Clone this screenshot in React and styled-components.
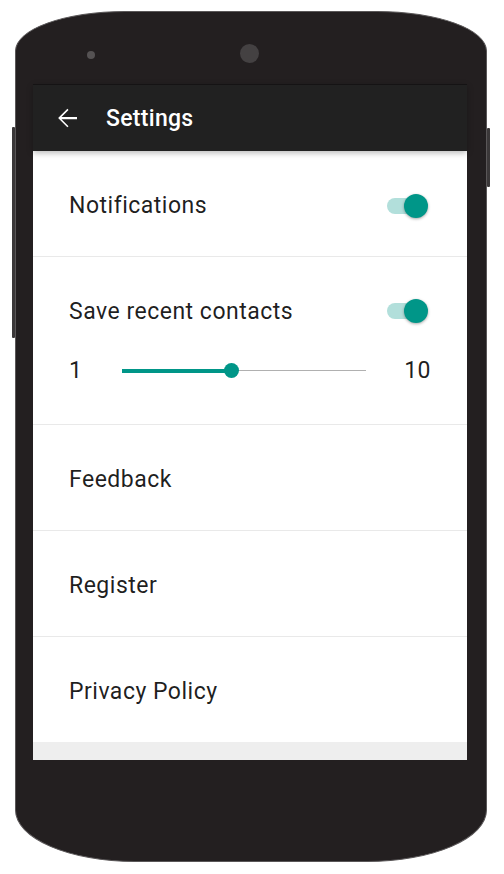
import React from 'react'
import styled, { createGlobalStyle } from 'styled-components'

const GlobalStyle = createGlobalStyle`
    body {
        margin: 0;
        background: #fff;
        font-family: Roboto, "Liberation Sans", sans-serif;
    }
`

const settings = [
    { title: 'Notifications', toggle: true },
    { title: 'Save recent contacts', toggle: true, slider: { min: 1, max: 10, value: 5 } },
    { title: 'Feedback' },
    { title: 'Register' },
    { title: 'Privacy Policy', last: true },
]

function BackArrow() {
    return (
        <svg width="30" height="30" viewBox="0 0 24 24">
            <path fill="#fff" d="M20 11.1H7.6l5.6-5.6L12.3 4.6 4.9 12l7.4 7.4.9-.9-5.6-5.6H20z" />
        </svg>
    )
}

function Switch() {
    return (
        <SwitchWrap>
            <Track />
            <Thumb />
        </SwitchWrap>
    )
}

function Slider({ min, max, value }) {
    const pct = ((value - min) / (max - min)) * 100
    return (
        <SliderRow>
            <RangeLabel>{min}</RangeLabel>
            <Rail>
                <Fill style={{ width: `${pct}%` }} />
                <Knob style={{ left: `${pct}%` }} />
            </Rail>
            <RangeLabel>{max}</RangeLabel>
        </SliderRow>
    )
}

function App() {
    return (
        <Page>
            <GlobalStyle />
            <Phone>
                <SideKey side="left" top={115} len={211} />
                <SideKey side="right" top={116} len={59} />
                <TopBezel>
                    <Speaker />
                    <Camera />
                </TopBezel>
                <Screen>
                    <Toolbar>
                        <BackArrow />
                        <Title>Settings</Title>
                    </Toolbar>
                    <List>
                        {settings.map(item => (
                            <Item key={item.title} tall={!!item.slider} last={item.last}>
                                <ItemHead>
                                    <Label>{item.title}</Label>
                                    {item.toggle && <Switch />}
                                </ItemHead>
                                {item.slider && <Slider {...item.slider} />}
                            </Item>
                        ))}
                    </List>
                    <Footer />
                </Screen>
                <BottomBezel />
            </Phone>
        </Page>
    )
}

export default App

const Page = styled.div`
    padding: 11px 0 0 15px;
`

const Phone = styled.div`
    position: relative;
    width: 472px;
    height: 851px;
    box-sizing: border-box;
    background: #231f20;
    border: 1px solid #5a5758;
    border-radius: 110px 110px 120px 120px / 40px 40px 52px 52px;
    display: flex;
    flex-direction: column;
`

const SideKey = styled.div`
    position: absolute;
    top: ${p => p.top}px;
    ${p => p.side}: -4px;
    width: 3px;
    height: ${p => p.len}px;
    background: #3b3839;
    border-radius: 1px;
`

const TopBezel = styled.div`
    height: 72px;
    box-sizing: border-box;
    padding: 14px 0 0 71px;
    display: flex;
    align-items: center;
`

const Speaker = styled.div`
    width: 8px;
    height: 8px;
    border-radius: 50%;
    background: #555253;
`

const Camera = styled.div`
    width: 19px;
    height: 19px;
    margin: -3px 0 0 145px;
    border-radius: 50%;
    background: #444142;
`

const Screen = styled.div`
    margin: 0 19px 0 17px;
    height: 676px;
    display: flex;
    flex-direction: column;
    background: #fff;
`

const Toolbar = styled.div`
    position: relative;
    z-index: 1;
    height: 67px;
    box-sizing: border-box;
    border-top: 1px solid #151314;
    background: #212121;
    display: flex;
    align-items: center;
    padding-left: 19px;
    gap: 24px;
    box-shadow: 0 2px 6px rgba(0, 0, 0, 0.28);
`

const Title = styled.div`
    color: #fff;
    font-size: 23px;
    font-weight: 500;
    letter-spacing: 0.3px;
`

const List = styled.div`
    flex: 1;
    display: flex;
    flex-direction: column;
`

const Item = styled.div`
    height: ${p => (p.tall ? 168 : p.last ? 105 : 106)}px;
    box-sizing: border-box;
    border-bottom: ${p => (p.last ? 'none' : '1px solid #e9e9e9')};
    padding: ${p => (p.tall ? '40px' : '4px')} 39px 0 36px;
    display: flex;
    flex-direction: column;
    justify-content: ${p => (p.tall ? 'flex-start' : 'center')};
`

const ItemHead = styled.div`
    display: flex;
    align-items: center;
    justify-content: space-between;
    height: 28px;
`

const Label = styled.div`
    font-size: 23px;
    letter-spacing: 0.5px;
    color: rgba(0, 0, 0, 0.88);
`

const SwitchWrap = styled.div`
    position: relative;
    width: 41px;
    height: 24px;
    display: flex;
    align-items: center;
`

const Track = styled.div`
    width: 36px;
    height: 16px;
    border-radius: 8px;
    background: #b2dfdb;
`

const Thumb = styled.div`
    position: absolute;
    right: 0;
    top: 0;
    width: 24px;
    height: 24px;
    border-radius: 50%;
    background: #009688;
    box-shadow: 0 1px 3px rgba(0, 0, 0, 0.35);
`

const SliderRow = styled.div`
    display: flex;
    align-items: center;
    margin-top: 32px;
    margin-right: -3px;
`

const RangeLabel = styled.div`
    font-size: 23px;
    letter-spacing: 0.5px;
    color: rgba(0, 0, 0, 0.88);
`

const Rail = styled.div`
    position: relative;
    flex: 1;
    height: 1px;
    margin: 0 38px 0 40px;
    background: #b0b0b0;
`

const Fill = styled.div`
    position: absolute;
    left: 0;
    top: -1.5px;
    height: 4px;
    background: #009688;
`

const Knob = styled.div`
    position: absolute;
    top: -7px;
    width: 15px;
    height: 15px;
    margin-left: -7px;
    border-radius: 50%;
    background: #009688;
`

const Footer = styled.div`
    height: 18px;
    background: #eeeeee;
`

const BottomBezel = styled.div`
    flex: 1;
`
